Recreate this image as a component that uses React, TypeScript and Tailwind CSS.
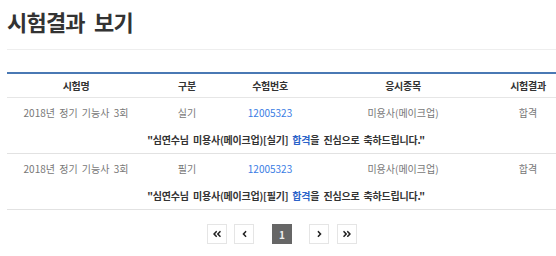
import React from 'react';
import { FaAngleDoubleLeft, FaAngleLeft, FaAngleRight, FaAngleDoubleRight } from 'react-icons/fa';

const rows = [
  { name: '2018년 정기 기능사 3회', type: '실기', no: '12005323', subject: '미용사(메이크업)', result: '합격' },
  { name: '2018년 정기 기능사 3회', type: '필기', no: '12005323', subject: '미용사(메이크업)', result: '합격' },
];

const cols = 'grid grid-cols-[138px_84px_82px_184px_66px]';

export default function App() {
  return (
    <div
      className="w-[556px] h-[256px] overflow-hidden bg-white text-[#333]"
      style={{ fontFamily: '"Noto Sans CJK KR", "Noto Sans", sans-serif' }}
    >
      {/* Title */}
      <div className="pl-[7px] pt-[6px] h-[49px]">
        <h1 className="text-[22px] font-bold leading-[30px] tracking-[-0.8px] [word-spacing:5px] text-[#333]">시험결과 보기</h1>
      </div>
      <div className="ml-[7px] border-t border-[#eeeeee] h-[23px]" />

      {/* Result table */}
      <div className="ml-[7px] w-[554px] border-t-2 border-[#4a79b4] text-[10px]">
        <div className={`${cols} h-[24px] items-center text-center font-bold text-[#333] border-b border-[#e6e6e6] tracking-[-0.3px]`}>
          <div>시험명</div>
          <div>구분</div>
          <div>수험번호</div>
          <div>응시종목</div>
          <div>시험결과</div>
        </div>
        {rows.map((r, i) => (
          <div key={i} className="border-b border-[#e2e2e2]">
            <div className={`${cols} h-[28px] items-center text-center text-[#777] [word-spacing:2px]`}>
              <div>{r.name}</div>
              <div>{r.type}</div>
              <div className="text-[#3b7de4]">{r.no}</div>
              <div>{r.subject}</div>
              <div>{r.result}</div>
            </div>
            <div className="h-[27px] flex items-center justify-center pl-[4px] font-bold text-[#333] tracking-[-0.2px] [word-spacing:2px] whitespace-pre">
              "심연수님 {r.subject}[{r.type}] <span className="text-[#2b63c9]">합격</span>을 진심으로 축하드립니다."
            </div>
          </div>
        ))}
      </div>

      {/* Pagination */}
      <div className="flex items-center pl-[207px] pt-[14px]">
        <button className="w-[20px] h-[20px] flex items-center justify-center border border-[#e5e5e5] bg-white text-[#222]">
          <FaAngleDoubleLeft className="w-[10px] h-[10px]" />
        </button>
        <button className="ml-[7px] w-[20px] h-[20px] flex items-center justify-center border border-[#e5e5e5] bg-white text-[#222]">
          <FaAngleLeft className="w-[9px] h-[10px]" />
        </button>
        <span className="ml-[18px] w-[20px] h-[20px] flex items-center justify-center bg-[#666] text-[#eee] text-[10px] font-bold">
          1
        </span>
        <button className="ml-[17px] w-[20px] h-[20px] flex items-center justify-center border border-[#e5e5e5] bg-white text-[#222]">
          <FaAngleRight className="w-[9px] h-[10px]" />
        </button>
        <button className="ml-[8px] w-[20px] h-[20px] flex items-center justify-center border border-[#e5e5e5] bg-white text-[#222]">
          <FaAngleDoubleRight className="w-[10px] h-[10px]" />
        </button>
      </div>
    </div>
  );
}
